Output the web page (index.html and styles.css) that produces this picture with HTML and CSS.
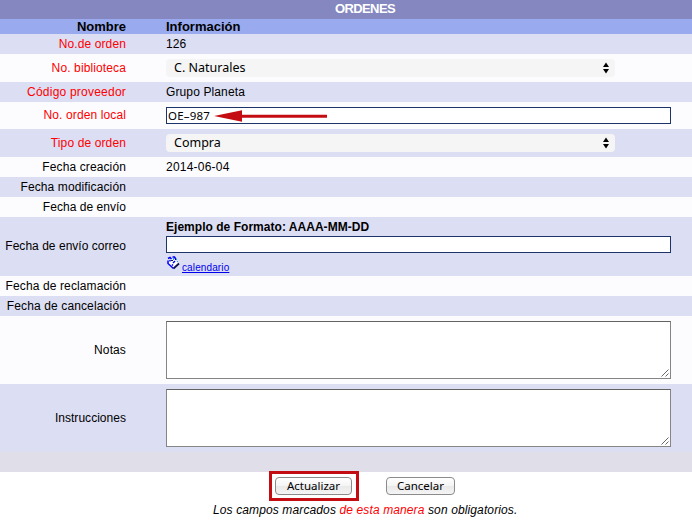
FILE: index.html
```html
<!DOCTYPE html>
<html lang="es">
<head>
<meta charset="utf-8">
<title>Ordenes</title>
<link rel="stylesheet" href="styles.css">
</head>
<body>
<form class="order">
  <h1 class="title"><span>ORDENES</span></h1>
  <div class="row head"><span class="label"><span>Nombre</span></span><span>Información</span></div>
  <div class="row alt"><span class="label req"><span>No.de orden</span></span><span>126</span></div>
  <div class="row tall"><span class="label req"><span>No. biblioteca</span></span>
    <div class="select"><span class="ui">C. Naturales</span><svg width="6" height="12" viewBox="0 0 6 12"><path d="M3 0.5L6 5H0zM0 7H6L3 11.5z"/></svg></div></div>
  <div class="row alt"><span class="label req"><span class="loose">Código proveedor</span></span><span>Grupo Planeta</span></div>
  <div class="row field"><span class="label req"><span>No. orden local</span></span>
    <div class="input"><span class="ui code">OE–987</span>
      <svg class="arrow" width="114" height="12" viewBox="0 0 114 12"><path fill="#c30d12" d="M0 6L28 0.3V4.7H113V7.7H28V11.8z"/></svg></div></div>
  <div class="row alt tall"><span class="label req"><span>Tipo de orden</span></span>
    <div class="select"><span class="ui">Compra</span><svg width="6" height="12" viewBox="0 0 6 12"><path d="M3 0.5L6 5H0zM0 7H6L3 11.5z"/></svg></div></div>
  <div class="row"><span class="label"><span>Fecha creación</span></span><span class="loose">2014-06-04</span></div>
  <div class="row alt"><span class="label"><span>Fecha modificación</span></span></div>
  <div class="row"><span class="label"><span class="tight">Fecha de envío</span></span></div>
  <div class="row alt mail"><span class="label"><span class="tight">Fecha de envío correo</span></span>
    <div class="mail-cell"><b class="tight">Ejemplo de Formato: AAAA-MM-DD</b>
      <div class="input"></div>
      <div class="calendar"><svg width="13" height="14" viewBox="0 0 13 14"><path fill="#fff" d="M2 5L7 3L12 8L7 12L2 8z"/><path fill="none" stroke="#00f" stroke-width="1.5" d="M1 4.5V7.5L6.5 12.5M1 2.5L3 1.5L4.5 3M5.5 1H7.5L9 3.5M6 7L8 5M3 4V5.5M5 8.5L6 9.5"/><path fill="none" stroke="#101050" stroke-width="1.8" d="M6.5 12.5L12 7.5"/><path fill="#101050" d="M4 4H6V5H4zM8 3H9V4H8z"/><path fill="#19a0ff" d="M6 2H7V4H6zM9 3H10V4H9zM10 5H11V6H10z"/></svg><a href="#">calendario</a></div>
    </div></div>
  <div class="row"><span class="label"><span>Fecha de reclamación</span></span></div>
  <div class="row alt"><span class="label"><span>Fecha de cancelación</span></span></div>
  <div class="row area"><span class="label"><span>Notas</span></span>
    <div class="textarea"><svg width="8" height="8" viewBox="0 0 8 8"><path d="M0.5 7.5L7.5 0.5M4.5 7.5L7.5 4.5"/></svg></div></div>
  <div class="row alt area"><span class="label"><span class="tight">Instrucciones</span></span>
    <div class="textarea"><svg width="8" height="8" viewBox="0 0 8 8"><path d="M0.5 7.5L7.5 0.5M4.5 7.5L7.5 4.5"/></svg></div></div>
  <div class="spacer"></div>
  <div class="actions"><div class="marked"><button type="button" class="update">Actualizar</button></div><button type="button" class="cancel">Cancelar</button></div>
  <p class="note"><span>Los campos marcados <em>de esta manera</em> son obligatorios.</span></p>
</form>
</body>
</html>
```
FILE: styles.css
```css
* { box-sizing: border-box; }
body { margin: 0; background: #fff; color: #000; font: 12px/14px "Liberation Sans", Arial, sans-serif; letter-spacing: 0.12px; overflow: hidden; }
.title { margin: 0; height: 19px; padding: 2px 0 0 38px; background: #8587c0; color: #fff; font-size: 13px; line-height: 14px; letter-spacing: -0.6px; text-align: center; }
.row { display: grid; grid-template-columns: 126px 505px; column-gap: 40px; align-items: center; height: 20px; background: #fcfcff; white-space: nowrap; }
.label { text-align: right; }
.loose { letter-spacing: 0.22px; }
.tight { letter-spacing: 0.03px; }
.alt { background: #dcdef3; }
.head { height: 15px; background: #99aaee; font-size: 13px; font-weight: bold; letter-spacing: 0; }
.req { color: #f00; }
.tall { height: 28px; }
.field { height: 27px; }
.field .label { margin-top: -1px; }
.ui { font: 12.5px/18px "Noto Sans", sans-serif; letter-spacing: 0; }
.code { font-size: 11.5px; letter-spacing: 0.2px; }
.select { display: flex; align-items: center; justify-content: space-between; width: 449px; height: 18px; padding: 0 6px 0 8px; border-radius: 4px; background: #f5f5f5; }
.input { display: flex; align-items: center; height: 17px; padding-left: 1px; border: 1px solid #1c3468; background: #fff; }
.arrow { margin-left: 4px; }
.mail { height: 59px; }
.mail .label { margin-top: -2px; }
.mail-cell { display: grid; grid-template-rows: 16px 17px 20px; align-self: start; padding-top: 3px; }
.calendar { display: flex; align-items: center; gap: 2px; padding-left: 1px; font-size: 10px; }
.calendar a { color: #0000ee; padding-top: 9px; }
.area { height: 68px; }
.textarea { display: flex; align-items: flex-end; justify-content: flex-end; height: 58px; padding: 1px; border: 1px solid #858585; border-top-color: #626262; background: #fff; }
.textarea path { fill: none; stroke: #555; stroke-width: 0.9; }
.spacer { height: 20px; background: #e0dfe9; }
.actions { display: flex; align-items: flex-start; gap: 27px; height: 30px; padding-left: 269px; }
.marked { width: 90px; height: 30px; margin-top: -1px; padding: 3px; border: 3px solid #c30d12; }
button { height: 18px; padding: 0; border: 1px solid #8b8b8b; border-radius: 4px; background: linear-gradient(#fff, #f4f4f4 50%, #e9e9e9 51%, #f5f5f5); color: #000; font: 11.5px/16px "Noto Sans", sans-serif; }
.update { display: block; width: 77px; }
.cancel { width: 69px; margin-top: 5px; }
.note { margin: 1px 0 0; padding-left: 213px; font-style: italic; white-space: nowrap; }
.note em { color: #f00; }
```
